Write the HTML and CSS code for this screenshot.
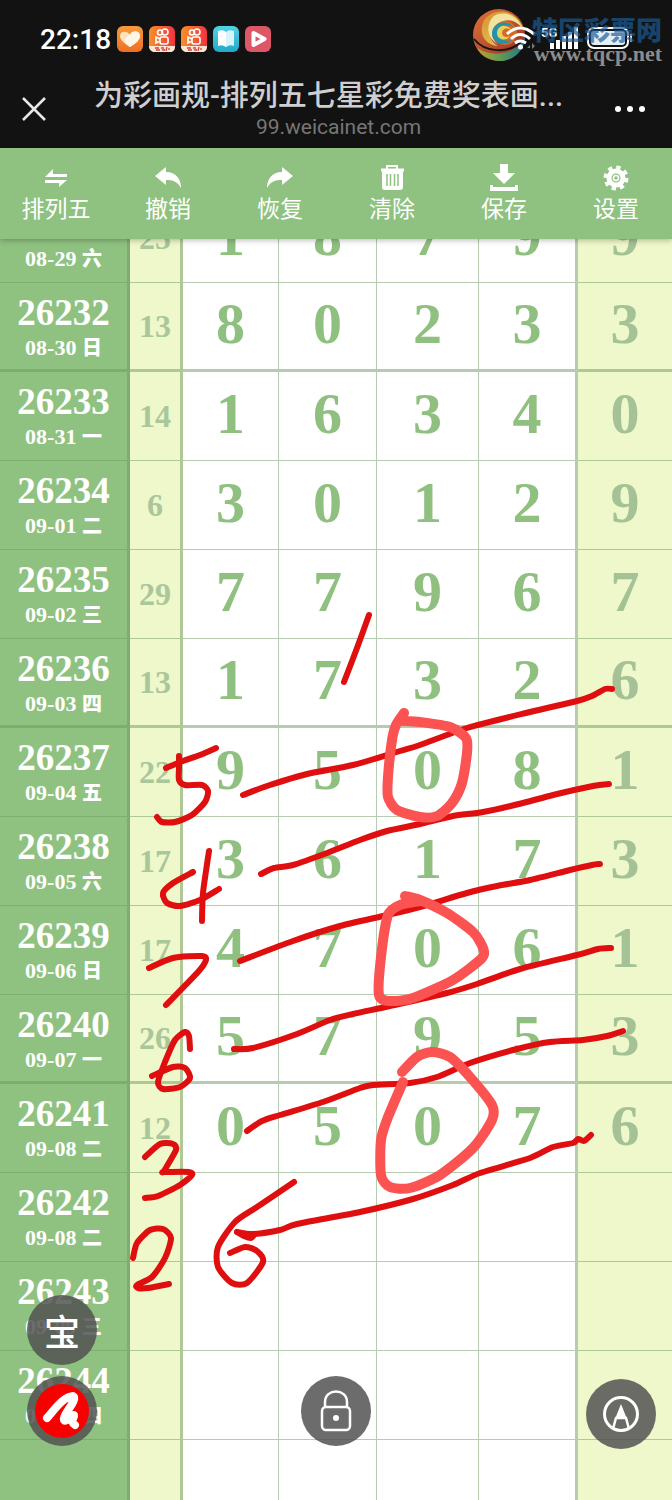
FILE: index.html
```html
<!DOCTYPE html>
<html lang="zh-CN">
<head>
    <meta charset="utf-8">
    <meta name="viewport" content="width=device-width, initial-scale=1">
    <title>为彩画规-排列五七星彩免费奖表画规</title>
    <link rel="stylesheet" href="styles.css">
</head>
<body>
    <header class="top">
        <div class="status-bar">
            <span class="clock">22:18</span>
            <span class="notices">
                <svg class="app-icon" viewBox="0 0 26 26">
                    <defs>
                        <linearGradient id="heart-bg" x1="0" y1="0" x2="0" y2="1"><stop offset="0" stop-color="#f79a3c"/><stop offset="1" stop-color="#ee6f25"/></linearGradient>
                        <linearGradient id="video-bg" x1="0" y1="0" x2="1" y2="0"><stop offset="0" stop-color="#f79128"/><stop offset="1" stop-color="#f2323c"/></linearGradient>
                        <linearGradient id="book-bg" x1="0" y1="0" x2="0" y2="1"><stop offset="0" stop-color="#52d3e6"/><stop offset="1" stop-color="#22a9c8"/></linearGradient>
                    </defs>
                    <rect width="26" height="26" rx="6" fill="url(#heart-bg)"/>
                    <path d="M13 21C8 18 3 14 3 10C3 5 10 4 13 9C16 4 23 5 23 10C23 14 18 18 13 21Z" fill="#ffe3bd"/>
                    <path d="M13 21C10 19 7 16 8 13L15 6C19 4 23 6 23 10C23 14 18 18 13 21Z" fill="#fff6e8"/>
                </svg>
                <svg class="app-icon" viewBox="0 0 26 26">
                    <rect width="26" height="26" rx="6" fill="url(#video-bg)"/>
                    <g fill="none" stroke="#fff" stroke-width="1.6"><circle cx="11" cy="6.500" r="2.500"/><circle cx="16" cy="6" r="3"/><rect x="11" y="11" width="8" height="7" rx="2"/><path d="M11 13L7 11V17L11 15"/></g>
                    <path d="M0 20H26V21C26 24 24 26 21 26H6C3 26 0 24 0 20Z" fill="#fbe6d6"/>
                    <path d="M6 22H10M7 24H11M12 22H15M13 24H16M18 21L17 25M20 22V24" stroke="#d2433c" stroke-width="1.300"/>
                </svg>
                <svg class="app-icon" viewBox="0 0 26 26">
                    <rect width="26" height="26" rx="6" fill="url(#video-bg)"/>
                    <g fill="none" stroke="#fff" stroke-width="1.6"><circle cx="11" cy="6.500" r="2.500"/><circle cx="16" cy="6" r="3"/><rect x="11" y="11" width="8" height="7" rx="2"/><path d="M11 13L7 11V17L11 15"/></g>
                    <path d="M0 20H26V21C26 24 24 26 21 26H6C3 26 0 24 0 20Z" fill="#fbe6d6"/>
                    <path d="M6 22H10M7 24H11M12 22H15M13 24H16M18 21L17 25M20 22V24" stroke="#d2433c" stroke-width="1.300"/>
                </svg>
                <svg class="app-icon" viewBox="0 0 26 26">
                    <rect width="26" height="26" rx="6" fill="url(#book-bg)"/>
                    <path d="M5 5Q10 3 13 6V21Q9 18 5 20Z" fill="#fff"/>
                    <path d="M21 5Q16 3 13 6V21Q17 18 21 20Z" fill="#d9f4f8"/>
                </svg>
                <svg class="app-icon" viewBox="0 0 26 26">
                    <rect width="26" height="26" rx="6" fill="#dd5767"/>
                    <path d="M8.500 7V19L19.500 13Z" fill="none" stroke="#fff" stroke-width="4" stroke-linejoin="round"/>
                </svg>
            </span>
            <svg class="signals" viewBox="0 0 132 28">
                <g fill="none" stroke="#fff" stroke-width="3">
                    <path d="M3 9Q16 -3 30 9"/>
                    <path d="M7 14Q16 5 26 14"/>
                    <path d="M11 18Q16 14 22 18"/>
                </g>
                <circle cx="16.500" cy="22" r="2.500" fill="#fff"/>
                <path d="M26 20L23 23H26ZM28 18V24L31 21Z" fill="#777"/>
                <text class="net" x="37" y="12">5G</text>
                <g fill="#fff"><rect x="46" y="18" width="4" height="6"/><rect x="52" y="15" width="4" height="9"/><rect x="58" y="11" width="4" height="13"/><rect x="64" y="7" width="4" height="17"/><rect x="70" y="2" width="4" height="22"/></g>
                <rect x="84" y="3" width="40" height="20" rx="6" fill="none" stroke="#fff" stroke-width="2"/>
                <rect x="87" y="6" width="34" height="14" rx="3" fill="#e4eef6"/>
                <rect x="126" y="9" width="2" height="8" fill="#ddd"/>
            </svg>
        </div>
        <div class="title-bar">
            <button class="icon-btn" aria-label="关闭">
                <svg width="24" height="24" viewBox="0 0 24 24"><path d="M1 1L23 23M23 1L1 23" stroke="#e8e8e8" stroke-width="2.500"/></svg>
            </button>
            <div class="page-name">
                <h1>为彩画规-排列五七星彩免费奖表画...</h1>
                <p>99.weicainet.com</p>
            </div>
            <button class="icon-btn" aria-label="更多">
                <svg width="32" height="8" viewBox="0 0 32 8" fill="#fff"><circle cx="4" cy="4" r="3"/><circle cx="16" cy="4" r="3"/><circle cx="28" cy="4" r="3"/></svg>
            </button>
        </div>
        <div class="watermark">
            <svg width="54" height="54" viewBox="0 0 54 54">
                <defs>
                    <linearGradient id="wm-rim" x1="0" y1="0" x2="1" y2="1"><stop offset="0" stop-color="#e0733a"/><stop offset="1" stop-color="#8f2f24"/></linearGradient>
                    <linearGradient id="wm-gold" x1="0" y1="0" x2="1" y2="1"><stop offset="0" stop-color="#d9902c"/><stop offset="1" stop-color="#e8d468"/></linearGradient>
                    <linearGradient id="wm-sea" x1="0" y1="0" x2="1" y2="0"><stop offset="0" stop-color="#b9a52f"/><stop offset="0.500" stop-color="#5c9a58"/><stop offset="1" stop-color="#1b7590"/></linearGradient>
                </defs>
                <circle cx="27" cy="27" r="26" fill="url(#wm-rim)"/>
                <path d="M16 8C30 -2 48 6 52 23C46 12 33 8 24 14C15 20 16 33 26 38C14 37 8 28 10 18C11 13 13 10 16 8Z" fill="url(#wm-gold)"/>
                <path d="M22 8C33 2 45 8 49 18C41 10 31 11 25 17C18 23 19 31 26 36C15 31 13 16 22 8Z" fill="#f0e3a0"/>
                <path d="M53 28C53 42 42 53 28 53C18 53 9 48 5 40C14 46 26 47 35 44C45 41 50 36 53 28Z" fill="url(#wm-sea)"/>
                <path d="M2 31C12 44 36 47 50 33" fill="none" stroke="#1c1412" stroke-width="2"/>
                <circle cx="33" cy="25" r="12" fill="#d66b28"/>
                <path d="M20 26C20 14 34 11 42 19C36 16 27 18 27 25C27 32 36 35 41 31C35 39 21 37 20 26Z" fill="#2492ae"/>
                <path d="M25 25C25 17 35 15 39 22C35 19 30 21 30 25C30 29 35 30 38 28C34 34 25 32 25 25Z" fill="#e6d35b"/>
            </svg>
            <div class="watermark-text">
                <span class="wm-name">特区彩票网</span>
                <span class="wm-site">www.tqcp.net</span>
            </div>
        </div>
    </header>

    <nav class="toolbar">
        <button>
            <svg viewBox="0 0 28 28" fill="#fff"><path d="M3 13H25V10H11V5ZM25 16H3V19H17V23Z"/></svg>
            排列五
        </button>
        <button>
            <svg viewBox="0 0 28 28" fill="#fff"><path d="M1 12L12 3V8C22 8 27 15 27 24C23 17 19 16 12 16V21Z"/></svg>
            撤销
        </button>
        <button>
            <svg viewBox="0 0 28 28" fill="#fff"><path d="M27 12L16 3V8C6 8 1 15 1 24C5 17 9 16 16 16V21Z"/></svg>
            恢复
        </button>
        <button>
            <svg viewBox="0 0 28 28" fill="none" stroke="#fff"><path d="M9 5V2H19V5" stroke-width="2"/><path d="M3 6H26" stroke-width="3"/><path d="M4 7H25V23Q25 26 22 26H7Q4 26 4 23Z" fill="#fff" stroke="none"/><path d="M9 10V22M12.500 10V22M16.500 10V22M20 10V22" stroke="#8fc281" stroke-width="1.500"/></svg>
            清除
        </button>
        <button>
            <svg viewBox="0 0 28 28" fill="#fff"><path d="M10 0H18V9H25L14 20L3 9H10ZM0 21H3V23H25V21H28V27H0Z"/></svg>
            保存
        </button>
        <button>
            <svg viewBox="0 0 28 28" fill="none" stroke="#fff"><circle cx="14" cy="14" r="10" stroke-width="5" stroke-dasharray="4 3.854"/><circle cx="14" cy="14" r="7" stroke-width="5"/><circle cx="14" cy="14" r="2.500" stroke-width="1.500"/></svg>
            设置
        </button>
    </nav>

    <main class="board">
        <table class="results">
            <colgroup>
                <col class="c-issue"><col class="c-sum"><col class="c-d1"><col class="c-d2"><col class="c-d3"><col class="c-d4"><col class="c-last">
            </colgroup>
            <tbody>
                <tr><th scope="row">26231<small>08-29 <b>六</b></small></th><td class="sum">25</td><td>1</td><td>8</td><td>7</td><td>9</td><td class="last">9</td></tr>
                <tr class="sep"><th scope="row">26232<small>08-30 <b>日</b></small></th><td class="sum">13</td><td>8</td><td>0</td><td>2</td><td>3</td><td class="last">3</td></tr>
                <tr><th scope="row">26233<small>08-31 <b>一</b></small></th><td class="sum">14</td><td>1</td><td>6</td><td>3</td><td>4</td><td class="last">0</td></tr>
                <tr><th scope="row">26234<small>09-01 <b>二</b></small></th><td class="sum">6</td><td>3</td><td>0</td><td>1</td><td>2</td><td class="last">9</td></tr>
                <tr><th scope="row">26235<small>09-02 <b>三</b></small></th><td class="sum">29</td><td>7</td><td>7</td><td>9</td><td>6</td><td class="last">7</td></tr>
                <tr class="sep"><th scope="row">26236<small>09-03 <b>四</b></small></th><td class="sum">13</td><td>1</td><td>7</td><td>3</td><td>2</td><td class="last">6</td></tr>
                <tr><th scope="row">26237<small>09-04 <b>五</b></small></th><td class="sum">22</td><td>9</td><td>5</td><td>0</td><td>8</td><td class="last">1</td></tr>
                <tr><th scope="row">26238<small>09-05 <b>六</b></small></th><td class="sum">17</td><td>3</td><td>6</td><td>1</td><td>7</td><td class="last">3</td></tr>
                <tr><th scope="row">26239<small>09-06 <b>日</b></small></th><td class="sum">17</td><td>4</td><td>7</td><td>0</td><td>6</td><td class="last">1</td></tr>
                <tr class="sep"><th scope="row">26240<small>09-07 <b>一</b></small></th><td class="sum">26</td><td>5</td><td>7</td><td>9</td><td>5</td><td class="last">3</td></tr>
                <tr><th scope="row">26241<small>09-08 <b>二</b></small></th><td class="sum">12</td><td>0</td><td>5</td><td>0</td><td>7</td><td class="last">6</td></tr>
                <tr><th scope="row">26242<small>09-08 <b>二</b></small></th><td class="sum"></td><td></td><td></td><td></td><td></td><td class="last"></td></tr>
                <tr><th scope="row">26243<small>09-09 <b>三</b></small></th><td class="sum"></td><td></td><td></td><td></td><td></td><td class="last"></td></tr>
                <tr><th scope="row">26244<small>09-10 <b>四</b></small></th><td class="sum"></td><td></td><td></td><td></td><td></td><td class="last"></td></tr>
                <tr><th></th><td class="sum"></td><td></td><td></td><td></td><td></td><td class="last"></td></tr>
            </tbody>
        </table>
        <svg class="ink" viewBox="0 239 672 1261" preserveAspectRatio="none"></svg>

        <div class="tools-left">
            <button class="fab">宝</button>
            <button class="fab" aria-label="画笔">
                <svg width="54" height="54" viewBox="0 0 54 54">
                    <circle cx="27" cy="27" r="27" fill="#f80000"/>
                    <path d="M12 34C20 25 28 13 38 12C44 15 27 31 29 36C31 39 37 30 39 31C40 34 34 37 40 41" fill="none" stroke="#fff" stroke-width="8" stroke-linecap="round" stroke-linejoin="round"/>
                </svg>
            </button>
        </div>
        <button class="fab fab-lock" aria-label="锁定">
            <svg width="32" height="42" viewBox="0 0 32 42" fill="none" stroke="#fff" stroke-width="2.500">
                <rect x="2" y="17" width="28" height="23" rx="4"/>
                <path d="M5 17V12C5 -2 27 -2 27 12V17"/>
                <circle cx="16" cy="28" r="3" fill="#fff" stroke="none"/>
            </svg>
        </button>
        <button class="fab fab-pen" aria-label="画线">
            <svg width="36" height="36" viewBox="0 0 36 36" fill="none" stroke="#fff">
                <circle cx="18" cy="18" r="16.500" stroke-width="3"/>
                <path d="M10 33L13 22H23L26 33" stroke-width="2.500"/>
                <path d="M18 8L12 23H24Z" fill="#fff" stroke="none"/>
            </svg>
        </button>
    </main>
    <script src="script.js"></script>
</body>
</html>
```
FILE: styles.css
```css
* {
    box-sizing: border-box;
}

body {
    margin: 0;
    height: 100vh;
    display: flex;
    flex-direction: column;
    overflow: hidden;
    font-family: Roboto, "Noto Sans CJK SC", sans-serif;
    background-color: #fff;
}

button {
    border: none;
    padding: 0;
    background: none;
    color: #fff;
    font-family: inherit;
    cursor: pointer;
}

/* phone status bar and browser title */

.top {
    position: relative;
    background-color: #121212;
    color: #fff;
    padding-bottom: 8px;
}

.status-bar {
    display: flex;
    align-items: center;
    height: 78px;
    padding: 0 36px 0 40px;
}

.clock {
    font-size: 28px;
    font-weight: 500;
}

.notices {
    display: flex;
    gap: 6px;
    margin-left: 6px;
}

.app-icon {
    width: 26px;
    height: 26px;
}

.signals {
    position: relative;
    z-index: 1;
    width: 132px;
    height: 28px;
    margin-left: auto;
}

.net {
    font-size: 13px;
    font-weight: 700;
    fill: #fff;
}

.title-bar {
    display: grid;
    grid-template-columns: 68px 1fr 94px;
    align-items: center;
    height: 62px;
}

.icon-btn svg {
    display: block;
    margin: 0 auto;
}

.page-name {
    text-align: center;
    white-space: nowrap;
    padding-left: 26px;
}

.page-name h1 {
    margin: 0 20px 0 0;
    font-size: 29px;
    font-weight: 500;
    line-height: 36px;
    color: #cfcfcf;
}

.page-name p {
    margin: 0;
    font-size: 21px;
    line-height: 26px;
    color: #767676;
}

.watermark {
    position: absolute;
    top: 8px;
    right: 10px;
    display: flex;
    gap: 6px;
}

.watermark-text {
    position: relative;
    z-index: 2;
    display: flex;
    flex-direction: column;
    align-items: flex-end;
    padding-top: 6px;
}

.wm-name {
    font-family: "Noto Sans CJK SC", sans-serif;
    font-size: 26px;
    font-weight: 900;
    line-height: 30px;
    color: rgba(28, 92, 150, 0.7);
}

.wm-site {
    font-family: "Liberation Serif", serif;
    font-size: 22px;
    font-weight: 700;
    line-height: 20px;
    color: #8c8c8c;
}

/* green toolbar */

.toolbar {
    position: relative;
    z-index: 1;
    display: grid;
    grid-template-columns: repeat(6, 1fr);
    background-color: #8fc281;
    box-shadow: 0 1px 6px rgba(0, 0, 0, 0.3);
}

.toolbar button {
    display: flex;
    flex-direction: column;
    align-items: center;
    height: 91px;
    padding-top: 16px;
    font-size: 23px;
    line-height: 36px;
}

.toolbar svg {
    width: 28px;
    height: 28px;
}

/* results table, scrolled a little under the toolbar */

.board {
    position: relative;
    flex: 1;
    min-height: 0;
    overflow: hidden;
}

.results {
    width: 100%;
    margin-top: -45px;
    table-layout: fixed;
    border-spacing: 0;
    font-family: "Liberation Serif", "Noto Sans CJK SC", serif;
    font-weight: 700;
}

.c-issue { width: 130px; }
.c-sum { width: 53px; }
.c-d1 { width: 96px; }
.c-d2 { width: 98px; }
.c-d3 { width: 102px; }
.c-d4 { width: 99px; }
.c-last { width: 94px; }

.results th,
.results td {
    height: 89px;
    padding: 0;
    text-align: center;
    border: 0 solid rgba(112, 152, 98, 0.5);
    border-right-width: 1px;
    border-bottom-width: 1px;
}

.results .sep th,
.results .sep td {
    border-bottom-width: 3px;
}

.results th {
    padding-top: 8px;
    border-right-width: 3px;
    vertical-align: top;
    background-color: #8fc281;
    color: #fff;
    font-size: 37px;
    line-height: 43px;
}

.results small {
    display: block;
    font-size: 22px;
    line-height: 28px;
}

.results small b {
    font-size: 20px;
}

.results td {
    padding-bottom: 4px;
    font-size: 58px;
    line-height: 60px;
    color: #8fc080;
}

.results td.sum {
    padding-bottom: 0;
    border-right-width: 3px;
    background-color: #eef8ca;
    font-size: 32px;
    color: #aac69b;
}

.results td:nth-child(6) {
    border-right-width: 3px;
}

.results td.last {
    border-right-width: 0;
    background-color: #eef8ca;
    color: #a5c196;
}

.ink {
    position: absolute;
    top: 0;
    left: 0;
    width: 100%;
    height: 1261px;
    pointer-events: none;
}

.ink path {
    fill: none;
    stroke-linecap: round;
    stroke-linejoin: round;
}

.pen {
    stroke: #e00f0f;
    stroke-width: 6px;
}

.marker {
    stroke: #fb5252;
    stroke-width: 10px;
}

/* round floating buttons */

.fab {
    display: flex;
    align-items: center;
    justify-content: center;
    width: 70px;
    height: 70px;
    border-radius: 50%;
    background-color: rgba(82, 82, 82, 0.85);
    font-size: 36px;
    font-weight: 500;
}

.tools-left {
    position: absolute;
    left: 27px;
    bottom: 54px;
    display: flex;
    flex-direction: column;
    gap: 11px;
}

.fab-lock {
    position: absolute;
    left: calc(50% - 35px);
    bottom: 54px;
}

.fab-pen {
    position: absolute;
    right: 16px;
    bottom: 51px;
}
```
FILE: script.js
```javascript
// every stroke is a flat list of x, y points
const pen = [
    [369,615, 357,648, 344,682],
    [166,768, 183,761, 200,755, 216,748],
    [179,756, 179,768, 179,780, 185,785, 202,785, 208,791, 205,802, 192,815, 175,822, 162,822, 157,817],
    [243,795, 267,786, 307,774, 353,765, 400,751, 420,745, 467,728, 530,712, 577,701, 592,696, 605,689, 612,689],
    [261,874, 274,868, 293,865, 327,853, 360,840, 387,831, 420,824, 453,816, 483,812, 523,803, 553,795, 593,786, 609,784],
    [240,961, 293,941, 340,926, 383,916, 420,907, 467,893, 497,886, 530,880, 570,870, 592,865, 600,864],
    [234,1049, 253,1048, 297,1034, 330,1020, 353,1014, 390,1006, 447,993, 477,984, 520,969, 577,955, 598,949, 611,948],
    [247,1131, 262,1121, 280,1115, 323,1102, 360,1088, 373,1085, 410,1083, 437,1077, 470,1063, 517,1049, 550,1042, 583,1040, 607,1036, 623,1031],
    [591,1135, 584,1141, 578,1139, 573,1143, 553,1147, 530,1158, 480,1173, 453,1185, 413,1199, 360,1212, 297,1224, 280,1230, 253,1234, 237,1232],
    [237,1232, 244,1236, 251,1238, 254,1235],
    [193,872, 173,883, 163,893, 167,903, 180,906, 200,900, 219,889],
    [209,851, 203,893, 202,921],
    [149,968, 173,958, 202,956, 206,960, 198,972, 166,1005],
    [190,1049, 189,1036, 185,1032, 175,1040, 165,1062, 158,1082, 163,1089, 180,1087, 190,1078, 185,1068, 173,1067, 152,1076],
    [145,1157, 160,1144, 173,1144, 176,1150, 164,1171, 164,1172, 188,1172, 192,1175, 180,1185, 158,1196, 145,1198],
    [133,1258, 137,1243, 150,1230, 163,1229, 171,1238, 165,1258, 152,1277, 137,1285, 138,1288, 148,1288, 169,1284],
    [294,1182, 257,1207, 235,1222, 218,1247, 218,1267, 232,1283, 247,1283, 263,1262, 257,1251, 245,1247, 230,1253]
];

const marker = [
    [404,713, 396,725, 392,740, 388,777, 388,797, 397,810, 420,817, 437,816, 452,803, 462,783, 467,753, 466,738, 450,727, 420,722, 403,721],
    [405,896, 420,900, 447,913, 473,932, 483,948, 482,958, 453,980, 413,998, 390,1001, 379,995, 381,957, 388,915, 400,905, 420,901],
    [402,1072, 417,1057, 432,1052, 450,1057, 470,1077, 492,1105, 492,1120, 473,1148, 440,1175, 410,1188, 390,1187, 381,1175, 381,1140, 388,1117, 403,1082]
];

const ink = document.querySelector('.ink');

// smooth curve through all points
function toPath(flat) {
    const p = [];
    for (let i = 0; i < flat.length; i += 2) {
        p.push([flat[i], flat[i + 1]]);
    }
    let d = 'M' + p[0];
    for (let i = 0; i < p.length - 1; i++) {
        const a = p[i - 1] || p[i];
        const b = p[i];
        const c = p[i + 1];
        const e = p[i + 2] || c;
        const c1 = [b[0] + (c[0] - a[0]) / 8, b[1] + (c[1] - a[1]) / 8];
        const c2 = [c[0] - (e[0] - b[0]) / 8, c[1] - (e[1] - b[1]) / 8];
        d += 'C' + c1 + ' ' + c2 + ' ' + c;
    }
    return d;
}

function draw(strokes, name) {
    strokes.forEach(function (stroke) {
        const path = document.createElementNS('http://www.w3.org/2000/svg', 'path');
        path.setAttribute('d', toPath(stroke));
        path.setAttribute('class', name);
        ink.appendChild(path);
    });
}

draw(pen, 'pen');
draw(marker, 'marker');
```
